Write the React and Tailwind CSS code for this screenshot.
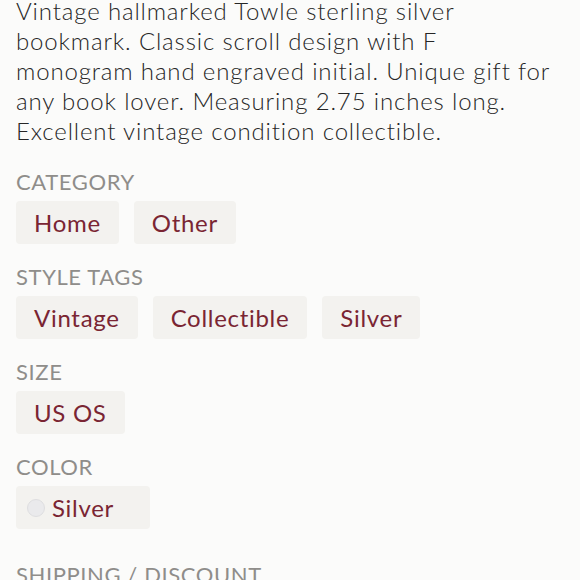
const sections = [
  { title: "CATEGORY", tags: ["Home", "Other"] },
  { title: "STYLE TAGS", tags: ["Vintage", "Collectible", "Silver"] },
  { title: "SIZE", tags: ["US OS"] },
];

function Tag({ children, dot }) {
  return (
    <span
      className={`inline-flex h-[43px] items-center gap-[7px] rounded-[4px] bg-[#f3f2ef] text-[24px] font-normal tracking-[0.7px] text-[#7a2533] ${
        dot ? "pl-[11px] pr-[36px]" : "px-[18px]"
      }`}
    >
      {children}
    </span>
  );
}

function Section({ title, children }) {
  return (
    <div className="flex flex-col">
      <h3 className="text-[22px] font-normal leading-[24px] tracking-[0.6px] text-[#8f8d8a]">{title}</h3>
      <div className="mt-[7px] flex flex-wrap gap-[15px]">{children}</div>
    </div>
  );
}

export default function App() {
  return (
    <div className="h-[580px] w-[580px] overflow-hidden bg-[#fbfbfa] px-4 font-['Lato',sans-serif] font-light">
      <p className="-mt-[4px] text-[24px] leading-[30px] tracking-[0.85px] text-[#262626]">
        Vintage hallmarked Towle sterling silver
        <br />
        bookmark. Classic scroll design with F
        <br />
        monogram hand engraved initial. Unique gift for
        <br />
        any book lover. Measuring 2.75 inches long.
        <br />
        Excellent vintage condition collectible.
      </p>

      <div className="mt-[24px] flex flex-col gap-[21px]">
        {sections.map((s) => (
          <Section key={s.title} title={s.title}>
            {s.tags.map((t) => (
              <Tag key={t}>{t}</Tag>
            ))}
          </Section>
        ))}
        <Section title="COLOR">
          <Tag dot>
            <span className="h-[18px] w-[18px] rounded-full border border-[#dedee0] bg-[#eaeaec]" />
            Silver
          </Tag>
        </Section>
        <h3 className="mt-[13px] text-[22px] font-normal leading-[24px] tracking-[0.6px] text-[#8f8d8a]">
          SHIPPING / DISCOUNT
        </h3>
      </div>
    </div>
  );
}
